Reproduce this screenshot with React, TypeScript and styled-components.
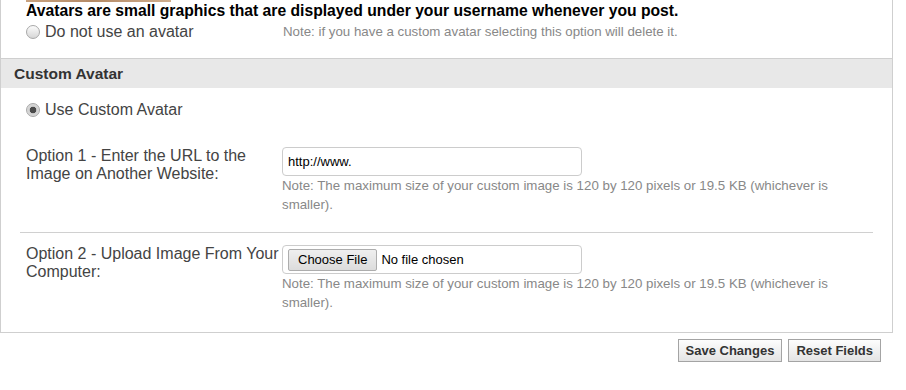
import styled, { createGlobalStyle } from 'styled-components'

const GlobalStyle = createGlobalStyle`
  body {
    margin: 0;
    background: #fff;
    font-family: "Liberation Sans", Arial, sans-serif;
  }
`

const Page = styled.div`
  width: 893px;
`

const Panel = styled.div`
  border: 1px solid #cfcfcf;
  border-top: none;
`

const Intro = styled.div`
  padding: 0 0 17px 25px;
`

const AvatarEdge = styled.div`
  width: 145px;
  height: 2px;
  background: linear-gradient(90deg, #c8a27f, #b48a66 45%, #cfae8e);
`

const Heading = styled.div`
  font-size: 15.7px;
  font-weight: bold;
  color: #000;
  line-height: 18px;
`

const IntroRow = styled.div`
  display: grid;
  grid-template-columns: 257px 1fr;
  align-items: center;
  height: 19px;
  margin-top: 2px;
`

const SectionHeader = styled.div`
  border-top: 1px solid #cfcfcf;
  background: #e8e8e8;
  height: 29px;
  line-height: 29px;
  padding-left: 13px;
  font-size: 15.5px;
  font-weight: bold;
  color: #333;
`

const Body = styled.div`
  padding: 13px 19px 2px;
`

const Choice = styled.label`
  display: flex;
  align-items: center;
  gap: 5px;
  font-size: 16px;
  line-height: 18px;
  color: #444;
`

const ChoiceBlock = styled.div`
  padding-left: 6px;
  margin-bottom: 28px;
`

const Radio = styled.span<{ $checked?: boolean }>`
  width: 14px;
  height: 14px;
  flex-shrink: 0;
  box-sizing: border-box;
  border-radius: 50%;
  border: 1px solid #a8a8a8;
  background: ${(p) =>
    p.$checked
      ? 'radial-gradient(circle, #4a4a4a 0 3px, #cfcfcf 3.6px, #e4e4e4 100%)'
      : 'linear-gradient(#fbfbfb, #d6d6d6)'};
`

const OptionRow = styled.div`
  display: grid;
  grid-template-columns: 256px 1fr;
  align-items: start;
  padding: 0 0 18px 6px;

  & + & {
    border-top: 1px solid #d0d0d0;
    padding-top: 12px;
  }
`

const OptionLabel = styled.div`
  font-size: 16px;
  line-height: 18.4px;
  color: #444;
`

const Field = styled.div`
  display: flex;
  flex-direction: column;
`

const TextInput = styled.input`
  width: 300px;
  height: 29px;
  box-sizing: border-box;
  border: 1px solid #ccc;
  border-radius: 4px;
  padding: 0 5px;
  font-family: "Liberation Sans", Arial, sans-serif;
  font-size: 13px;
  color: #000;
  outline: none;
`

const FileBox = styled.div`
  width: 300px;
  height: 29px;
  box-sizing: border-box;
  border: 1px solid #ccc;
  border-radius: 4px;
  display: flex;
  align-items: center;
  padding-left: 5px;
  font-size: 13px;
  color: #000;
`

const FileButton = styled.button`
  height: 22px;
  padding: 0 9px;
  border: 1px solid #adadad;
  border-radius: 2px;
  background: linear-gradient(#efefef, #dcdcdc);
  font-family: "Liberation Sans", Arial, sans-serif;
  font-size: 13px;
  color: #000;
  margin-right: 4px;
`

const Note = styled.div`
  font-size: 13.3px;
  line-height: 19px;
  color: #888;
`

const Actions = styled.div`
  display: flex;
  justify-content: flex-end;
  gap: 6px;
  padding: 6px 12px 0 0;
`

const ActionButton = styled.button`
  height: 23px;
  padding: 0 7px;
  border: 1px solid #a4a4a4;
  background: linear-gradient(#fdfdfd, #e4e4e4);
  font-family: "Liberation Sans", Arial, sans-serif;
  font-size: 13px;
  font-weight: bold;
  color: #333;
`

const sizeNote =
  'Note: The maximum size of your custom image is 120 by 120 pixels or 19.5 KB (whichever is smaller).'

export default function App() {
  return (
    <Page>
      <GlobalStyle />
      <Panel>
        <Intro>
          <AvatarEdge />
          <Heading>Avatars are small graphics that are displayed under your username whenever you post.</Heading>
          <IntroRow>
            <Choice>
              <Radio />
              Do not use an avatar
            </Choice>
            <Note>Note: if you have a custom avatar selecting this option will delete it.</Note>
          </IntroRow>
        </Intro>
        <SectionHeader>Custom Avatar</SectionHeader>
        <Body>
          <ChoiceBlock>
            <Choice>
              <Radio $checked />
              Use Custom Avatar
            </Choice>
          </ChoiceBlock>
          <OptionRow>
            <OptionLabel>Option 1 - Enter the URL to the Image on Another Website:</OptionLabel>
            <Field>
              <TextInput defaultValue="http://www." />
              <Note>{sizeNote}</Note>
            </Field>
          </OptionRow>
          <OptionRow>
            <OptionLabel>Option 2 - Upload Image From Your Computer:</OptionLabel>
            <Field>
              <FileBox>
                <FileButton>Choose File</FileButton>
                No file chosen
              </FileBox>
              <Note>{sizeNote}</Note>
            </Field>
          </OptionRow>
        </Body>
      </Panel>
      <Actions>
        <ActionButton>Save Changes</ActionButton>
        <ActionButton>Reset Fields</ActionButton>
      </Actions>
    </Page>
  )
}
